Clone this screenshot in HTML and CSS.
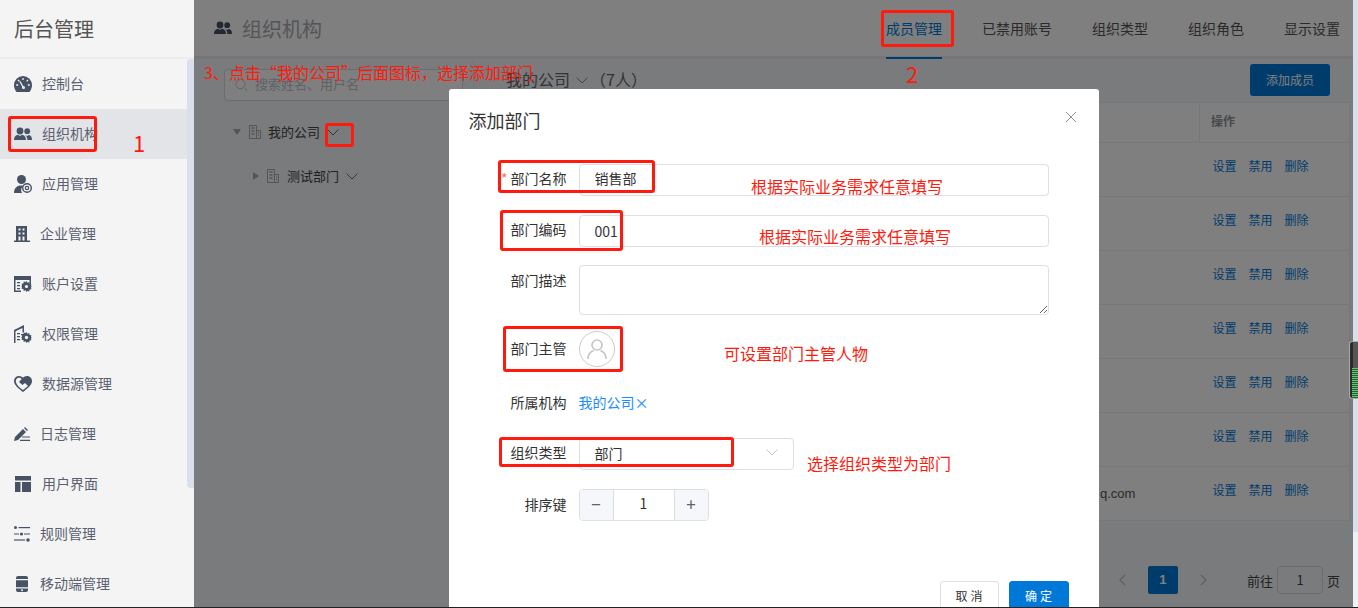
FILE: index.html
```html
<!DOCTYPE html>
<html lang="zh-CN">
<head>
<meta charset="utf-8">
<title>后台管理</title>
<link rel="stylesheet" href="styles.css">
</head>
<body>
<svg class="defs" width="0" height="0">
	<symbol id="i-group" viewBox="0 0 18 14">
		<circle cx="6" cy="4" r="3.4"/><path d="M0 13c0-3.6 2.2-5 4-5.300l2 1.300 2-1.300c1.800.3 4 1.700 4 5.300z"/>
		<circle cx="13.200" cy="4.200" r="2.900"/><path d="M11.200 8l2 1 1.800-1c1.500.3 3 1.600 3 5h-4.600c0-2-.8-3.800-2.200-5z"/>
	</symbol>
	<symbol id="i-tree" viewBox="0 0 12 14">
		<path d="M.5.500h7v13h-7zM7.500 5.500h4v8h-4z" fill="none" stroke="#aaa" stroke-width="1"/>
		<path d="M2.500 3h3M2.500 6h3M2.500 9h3M9 8h1M9 10.500h1" stroke="#aaa" stroke-width="1.400"/>
	</symbol>
	<symbol id="i-down" viewBox="0 0 12 7">
		<path d="M.5.500 6 6 11.500.500" fill="none" stroke="currentColor" stroke-width="1"/>
	</symbol>
	<symbol id="i-gear" viewBox="0 0 12 12">
		<path d="M6 0l1 1.800 2-.6.400 2 2 .4-.6 2L12 6l-1.200 1 .6 2-2 .400-.4 2-2-.6L6 12l-1-1.800-2 .6-.4-2-2-.4.600-2L0 6l1.200-1-.6-2 2-.400.400-2 2 .6z"/>
	</symbol>
</svg>

<div id="page">
	<aside class="side">
		<div class="side-head">后台管理</div>
		<ul class="menu">
			<li>
				<svg class="ico" width="18" height="16" viewBox="0 0 18 16"><path d="M9 0a9 9 0 0 1 9 9c0 2.800-1 5-2.500 7h-13C1 14 0 11.800 0 9a9 9 0 0 1 9-9z"/><path d="M9 2v2M4 4l1.400 1.400M14 4l-1.400 1.400M2.200 9h2M13.800 9h2M6 5.500l3 5.500" stroke="#f4f4f4" stroke-width="1.300" fill="none"/><circle cx="9.500" cy="11.500" r="1.500" fill="#f4f4f4"/></svg>
				<span>控制台</span>
			</li>
			<li class="on">
				<svg class="ico" width="18" height="14"><use href="#i-group"/></svg>
				<span>组织机构</span>
			</li>
			<li>
				<svg class="ico" width="18" height="18" viewBox="0 0 18 18"><circle cx="7.500" cy="4.500" r="4.500"/><path d="M0 18c0-5 3-7.500 7-7.500 1 0 1.500.2 2 .4A6 6 0 0 0 8 18z"/><circle cx="13" cy="13" r="4.300" fill="none" stroke="#475265" stroke-width="1.400"/><circle cx="13" cy="13" r="1.700" fill="none" stroke="#475265" stroke-width="1.200"/></svg>
				<span>应用管理</span>
			</li>
			<li class="w16">
				<svg class="ico" width="16" height="16" viewBox="0 0 16 16"><path d="M2 0h11v14.500h3V16H0v-1.500h2z"/><path d="M4.500 2.500h2v2h-2zM8.500 2.500h2v2h-2zM4.500 6.500h2v2h-2zM8.500 6.500h2v2h-2zM4.500 10.500h2v4h-2zM8.500 10.500h2v4h-2z" fill="#f4f4f4"/></svg>
				<span>企业管理</span>
			</li>
			<li>
				<svg class="ico" width="18" height="16" viewBox="0 0 18 16"><path d="M0 0h17v8h-1.500V4h-14v10.500H7V16H0z"/><path d="M3 6h3v1.200H3zM3 9h3v1.200H3zM3 12h3v1.200H3z"/><use href="#i-gear" x="7" y="5" width="11" height="11"/><circle cx="12.500" cy="10.500" r="1.600" fill="#f4f4f4"/></svg>
				<span>账户设置</span>
			</li>
			<li>
				<svg class="ico" width="18" height="18" viewBox="0 0 18 18"><path d="M0 5l10-5v7.500H8.500V3L1.500 6.300V18H0z"/><path d="M3 8h3v1.300H3zM3 11h3v1.300H3zM3 14h3v1.300H3zM7 9h3v1H7z"/><use href="#i-gear" x="7" y="7" width="11" height="11"/><circle cx="12.500" cy="12.500" r="1.700" fill="#f4f4f4"/></svg>
				<span>权限管理</span>
			</li>
			<li>
				<svg class="ico" width="18" height="16" viewBox="0 0 18 16"><path d="M5 0c1.600 0 3 .7 4 1.800C10 .7 11.400 0 13 0c2.800 0 5 2.200 5 5 0 4-4.500 7.500-9 11C4.500 12.500 0 9 0 5c0-2.800 2.200-5 5-5z"/><path d="M1.800 5c0-1.800 1.400-3.200 3.200-3.200 1 0 2 .4 2.600 1.200L5 6l3.500 3 2.500-2 3 3-5 4C5 11.500 1.800 8 1.800 5z" fill="#f4f4f4"/></svg>
				<span>数据源管理</span>
			</li>
			<li class="w16">
				<svg class="ico" width="16" height="14" viewBox="0 0 16 14"><path d="M0 14l1-4L9 2l3 3-8 8zM10 1l1-1 3 3-1 1z"/><path d="M8 9.500h8v1.100H8zM6 12.800h10V14H6z"/></svg>
				<span>日志管理</span>
			</li>
			<li>
				<svg class="ico" width="18" height="16" viewBox="0 0 18 16"><path d="M1 0h16v4.500H1zM1 6h5.500v10H1zM8 6h9v10H8z"/></svg>
				<span>用户界面</span>
			</li>
			<li class="w16">
				<svg class="ico" width="16" height="16" viewBox="0 0 16 16"><circle cx="1.500" cy="1.500" r="1.500"/><path d="M4.500 1h11.500v1.200H4.500z"/><circle cx="7.500" cy="8" r="1.600"/><path d="M0 7.400h5v1.200H0zM10 7.400h6v1.200h-6z"/><circle cx="14" cy="14" r="1.800"/><path d="M0 13.400h11v1.200H0z"/></svg>
				<span>规则管理</span>
			</li>
			<li class="phone">
				<svg class="ico" width="12" height="16" viewBox="0 0 12 16"><path d="M2 0h8a2 2 0 0 1 2 2v1H0V2a2 2 0 0 1 2-2zM0 4.200h12v7H0zM0 12.400h12V14a2 2 0 0 1-2 2H2a2 2 0 0 1-2-2z"/><circle cx="6" cy="14.200" r="1" fill="#f4f4f4"/></svg>
				<span>移动端管理</span>
			</li>
		</ul>
		<div class="side-bar"></div>
	</aside>

	<main class="main">
		<header class="top">
			<svg class="top-ico" width="18" height="14"><use href="#i-group"/></svg>
			<h1>组织机构</h1>
			<nav class="tabs">
				<a class="on">成员管理</a>
				<a>已禁用账号</a>
				<a>组织类型</a>
				<a>组织角色</a>
				<a>显示设置</a>
			</nav>
		</header>

		<div class="content">
			<section class="left">
				<div class="search">
					<svg width="13" height="14" viewBox="0 0 14 14"><circle cx="6" cy="6" r="5" fill="none" stroke="#c0c4cc"/><path d="M10 10l3.500 3.500" stroke="#c0c4cc"/></svg>
					<span>搜索姓名、用户名</span>
				</div>
				<div class="node">
					<i class="tri-down"></i>
					<svg width="12" height="14"><use href="#i-tree"/></svg>
					<span>我的公司</span>
					<svg class="chev" width="12" height="7"><use href="#i-down"/></svg>
				</div>
				<div class="node child">
					<i class="tri-right"></i>
					<svg width="12" height="14"><use href="#i-tree"/></svg>
					<span>测试部门</span>
					<svg class="chev" width="12" height="7"><use href="#i-down"/></svg>
				</div>
			</section>

			<section class="right">
				<div class="right-head">
					<span class="org">我的公司</span>
					<svg class="chev" width="12" height="7"><use href="#i-down"/></svg>
					<span class="org">（7人）</span>
					<button class="add">添加成员</button>
				</div>
				<table class="members">
					<tr><th></th><th class="ops">操作</th></tr>
					<tr><td></td><td class="ops"><a>设置</a><a>禁用</a><a>删除</a></td></tr>
					<tr><td></td><td class="ops"><a>设置</a><a>禁用</a><a>删除</a></td></tr>
					<tr><td></td><td class="ops"><a>设置</a><a>禁用</a><a>删除</a></td></tr>
					<tr><td></td><td class="ops"><a>设置</a><a>禁用</a><a>删除</a></td></tr>
					<tr><td></td><td class="ops"><a>设置</a><a>禁用</a><a>删除</a></td></tr>
					<tr><td></td><td class="ops"><a>设置</a><a>禁用</a><a>删除</a></td></tr>
					<tr><td class="mail">q.com</td><td class="ops"><a>设置</a><a>禁用</a><a>删除</a></td></tr>
				</table>
				<div class="pager">
					<svg width="8" height="12" viewBox="0 0 8 12"><path d="M7 1L2 6l5 5" fill="none" stroke="#c0c4cc" stroke-width="1.500"/></svg>
					<b class="cur">1</b>
					<svg width="8" height="12" viewBox="0 0 8 12"><path d="M1 1l5 5-5 5" fill="none" stroke="#c0c4cc" stroke-width="1.500"/></svg>
					<span class="goto">前往</span>
					<span class="pg-input">1</span>
					<span>页</span>
				</div>
			</section>
		</div>

		<div class="mask">
			<div class="dialog">
				<div class="dlg-head">
					<h2>添加部门</h2>
					<svg width="12" height="12" viewBox="0 0 12 12"><path d="M1 1l10 10M11 1L1 11" stroke="#909399" stroke-width="1"/></svg>
				</div>
				<div class="row r-name">
					<label><em>*</em>部门名称</label>
					<input class="field" value="销售部" readonly>
				</div>
				<div class="row r-code">
					<label>部门编码</label>
					<input class="field" value="001" readonly>
				</div>
				<div class="row r-desc">
					<label>部门描述</label>
					<textarea class="area" readonly></textarea>
				</div>
				<div class="row r-boss">
					<label>部门主管</label>
					<div class="avatar">
						<svg width="20" height="22" viewBox="0 0 20 22"><circle cx="10" cy="7" r="5" fill="none" stroke="#c4c4c4" stroke-width="1.600"/><path d="M1 21c0-5 3-7.500 5.500-8.500M19 21c0-5-3-7.500-5.500-8.500" fill="none" stroke="#c4c4c4" stroke-width="1.600"/></svg>
					</div>
				</div>
				<div class="row r-org">
					<label>所属机构</label>
					<span class="org-link">我的公司×</span>
				</div>
				<div class="row r-type">
					<label>组织类型</label>
					<div class="select">部门<svg class="chev" width="12" height="7"><use href="#i-down"/></svg></div>
				</div>
				<div class="row">
					<label>排序键</label>
					<div class="num">
						<span class="step">−</span>
						<span class="val">1</span>
						<span class="step">+</span>
					</div>
				</div>
				<div class="dlg-foot">
					<button class="btn">取消</button>
					<button class="btn ok">确定</button>
				</div>
			</div>
		</div>
	</main>

	<div class="page-bar"><div class="page-thumb"></div></div>

	<!-- red notes drawn on top of the screenshot -->
	<div class="box b-menu"></div>
	<div class="box b-tab"></div>
	<div class="box b-chev"></div>
	<div class="box b-name"></div>
	<div class="box b-code"></div>
	<div class="box b-boss"></div>
	<div class="box b-type"></div>
	<div class="note n-1">1</div>
	<div class="note n-2">2</div>
	<div class="note n-3">3、点击“我的公司”后面图标，选择添加部门</div>
	<div class="note n-name">根据实际业务需求任意填写</div>
	<div class="note n-code">根据实际业务需求任意填写</div>
	<div class="note n-boss">可设置部门主管人物</div>
	<div class="note n-type">选择组织类型为部门</div>
	<div class="grip"></div>
</div>
</body>
</html>
```
FILE: styles.css
```css
* {box-sizing:border-box;}
html, body {margin:0; padding:0; height:608px; overflow:hidden;}
body {background:#222; font-family:"Noto Sans CJK SC","Liberation Sans",sans-serif; font-size:14px; color:#333;}
.defs {position:absolute;}
h1, h2 {margin:0; font-weight:normal;}
ul {list-style:none; margin:0; padding:0;}

#page {position:relative; display:flex; height:607px; overflow:hidden;}

/* sidebar */
.side {position:relative; z-index:2; flex:0 0 194px; background:#f4f4f4; overflow:hidden;}
.side-head {height:59px; padding-left:14px; font-size:20px; line-height:57px; color:#555; border-bottom:2px solid #ececec;}
.menu li {display:flex; align-items:center; height:50px; color:#5a6070; font-size:14px;}
.menu li.on {background:#e3e4e8; margin-right:7px;}
.menu li span {padding-bottom:2px;}
.menu .ico {flex:none; margin-left:14px; margin-right:10px; fill:#475265;}
.menu .w16 .ico {margin-right:10px;}
.menu .phone .ico {margin-left:16px; margin-right:12px; height:18px;}
.side-bar {position:absolute; right:0; top:59px; width:7px; height:429px; background:#d9e0eb; border-radius:4px 0 0 4px;}

/* main */
.main {position:relative; flex:1; background:#f4f6f9; overflow:hidden;}
.top {display:flex; align-items:center; height:59px; padding:0 13px 0 20px; background:#fff; border-bottom:3px solid #ecedf2;}
.top-ico {fill:#475265; margin-right:10px;}
.top h1 {font-size:20px; color:#a8abb2;}
.tabs {display:flex; gap:40px; margin-left:auto; height:56px;}
.tabs a {line-height:57px; color:#555; height:59px;}
.tabs a.on {color:#0078d7; border-bottom:2px solid #0078d7;}

.content {display:flex; height:548px;}
.left {flex:0 0 280px; padding:10px 0 0 30px; border-right:1px solid #e6e8ee;}
.search {display:flex; align-items:center; gap:7px; width:239px; height:32px; padding-left:10px; border:1px solid #d6d9e2; border-radius:4px; color:#c0c4cc; background:#fff; font-size:13px;}
.search span {padding-bottom:3px;}
.node {display:flex; align-items:center; height:44px; margin-top:9px; padding-left:9px; color:#444; font-size:13px;}
.node span {padding-bottom:1px;}
.node.child {margin-top:0; padding-left:29px;}
.node svg {margin-right:7px;}
.node.child svg {margin-right:8px;}
.node .chev, .node.child .chev {margin:0 0 0 7px; color:#666;}
.tri-down {width:0; height:0; margin-right:8px; border:4.500px solid transparent; border-top:6px solid #aaa; border-bottom:0;}
.tri-right {width:0; height:0; margin-right:8px; border:4.500px solid transparent; border-left:6px solid #aaa; border-right:0;}

.right {flex:1; padding:5px 3px 0 32px;}
.right-head {display:flex; align-items:center; height:32px; color:#666;}
.org {font-size:16px; padding-bottom:3px;}
.right-head .chev {margin:0 2px 0 6px; color:#888;}
.add {width:80px; height:32px; margin-left:auto; margin-right:20px; padding:0 0 2px; border:none; border-radius:3px; background:#0078d7; color:#fff; font:inherit; font-size:12px;}

.members {width:100%; margin-top:6px; border-collapse:collapse; background:#fff; table-layout:fixed;}
.members th, .members td {border:1px solid #ebeef5; border-width:1px 0; padding:0;}
.members th {height:40px; padding-bottom:4px; text-align:left; font-size:12px; color:#909399;}
.members td {height:54px;}
.members th.ops {padding-left:11px; border-left:1px solid #ebeef5;}
.ops {width:150px; border-right:1px solid #ebeef5 !important;}
.members td.ops {padding-left:13px; padding-bottom:8px; font-size:12px;}
.ops a {margin-right:12px; color:#0078d7;}
.mail {padding-left:594px !important; padding-bottom:1px !important; font-family:"Liberation Sans",sans-serif; font-size:13px; color:#555;}

.pager {display:flex; align-items:center; height:30px; margin-top:44px; padding-right:10px; justify-content:flex-end; color:#444; font-size:13px;}
.cur {width:30px; height:28px; margin:0 22px; background:#0078d7; color:#fff; text-align:center; line-height:28px; border-radius:2px; font-family:"Liberation Sans",sans-serif;}
.goto {margin-left:39px;}
.pg-input {width:46px; height:28px; margin:0 4px; border:1px solid #d6d9e2; border-radius:4px; text-align:center; line-height:26px;}

/* dialog */
.mask {position:absolute; inset:0; display:flex; justify-content:center; align-items:flex-start; padding-top:89px; background:rgba(0,0,0,.5);}
.dialog {flex:0 0 650px; padding:0 50px 30px 0; background:#fff; border-radius:3px;}
.dlg-head {display:flex; justify-content:space-between; height:75px; padding:18px 0 0 20px; margin-right:-28px;}
.dlg-head h2 {font-size:18px; line-height:26px; color:#333;}
.dlg-head svg {margin:4px 0 0;}
.row {display:flex; align-items:center; margin-bottom:19px;}
.row label {flex:0 0 130px; padding:0 12px 2px 0; text-align:right; color:#333; font-size:14px;}
.row label em {margin-right:3px; color:#f56c6c; font-style:normal;}
.r-name label, .r-type label {padding-bottom:5px;}
.r-name .field {padding-bottom:4px;}
.r-code {margin-bottom:18px;}
.r-code label {padding-bottom:4px;}
.r-code .field {padding-bottom:1px;}
.r-desc {margin-bottom:16px; align-items:flex-start;}
.r-desc label {padding-top:5px;}
.r-boss {margin-bottom:20px;}
.r-org {height:32px;}
.r-type .select {padding-bottom:3px;}
.field {width:470px; height:32px; padding:0 15px; border:1px solid #dcdfe6; border-radius:4px; font:inherit; font-size:14px; color:#333; outline:none;}
.area {display:block; width:470px; height:50px; border:1px solid #dcdfe6; border-radius:4px; font:inherit; outline:none;}
.avatar {display:flex; align-items:center; justify-content:center; width:36px; height:36px; border:1px solid #ccc; border-radius:50%;}
.org-link {padding-bottom:2px; color:#1a8cff; font-size:14px;}
.select {display:flex; align-items:center; justify-content:space-between; width:215px; height:32px; padding:0 15px; border:1px solid #dcdfe6; border-radius:4px; color:#333;}
.select .chev {color:#c0c4cc;}
.num {display:flex; width:130px; height:32px; border:1px solid #dcdfe6; border-radius:4px; overflow:hidden;}
.step {flex:0 0 33px; background:#f5f7fa; text-align:center; line-height:27px; font-size:17px; color:#606266;}
.val {flex:1; border:solid #dcdfe6; border-width:0 1px; text-align:center; line-height:27px;}
.dlg-foot {display:flex; justify-content:flex-end; gap:10px; margin:60px -20px 0 0;}
.btn {width:59px; height:32px; padding:0 0 3px 3px; border:1px solid #dcdfe6; border-radius:3px; background:#fff; color:#333; font:inherit; font-size:12px; letter-spacing:3px;}
.btn.ok {width:60px; border-color:#0078d7; background:#0078d7; color:#fff;}

/* page scrollbar */
.page-bar {flex:0 0 5px; background:#eff1f6;}
.page-thumb {height:532px; background:#d9e0eb;}
.grip {position:absolute; z-index:5; left:1349px; top:341px; width:9px; height:58px; border:1px solid #aaa; border-right:0; border-radius:3px 0 0 3px;
	background:repeating-linear-gradient(#57c96f 0 1px,#2f5a3a 1px 2px) 2px 26px/6px 30px no-repeat,linear-gradient(90deg,#2b2b2b 0 3px,#555 3px);}

/* red marks */
.box {position:absolute; z-index:4; border:3px solid #ff1a0d; border-radius:3px;}
.b-menu {left:8px; top:116px; width:89px; height:36px;}
.b-tab {left:881px; top:10px; width:73px; height:37px;}
.b-chev {left:325px; top:123px; width:29px; height:24px;}
.b-name {left:498px; top:160px; width:157px; height:33px;}
.b-code {left:500px; top:210px; width:123px; height:41px;}
.b-boss {left:503px; top:326px; width:120px; height:46px;}
.b-type {left:499px; top:437px; width:235px; height:30px;}
.note {position:absolute; z-index:4; color:#ff1a0d; font-size:16px; line-height:20px; white-space:nowrap;}
.n-1 {left:133px; top:129px; font-size:22px; line-height:26px;}
.n-2 {left:906px; top:60px; font-size:22px; line-height:26px;}
.n-3 {left:204px; top:62px;}
.n-name {left:751px; top:176px;}
.n-code {left:759px; top:226px;}
.n-boss {left:724px; top:343px;}
.n-type {left:807px; top:453px;}
```
